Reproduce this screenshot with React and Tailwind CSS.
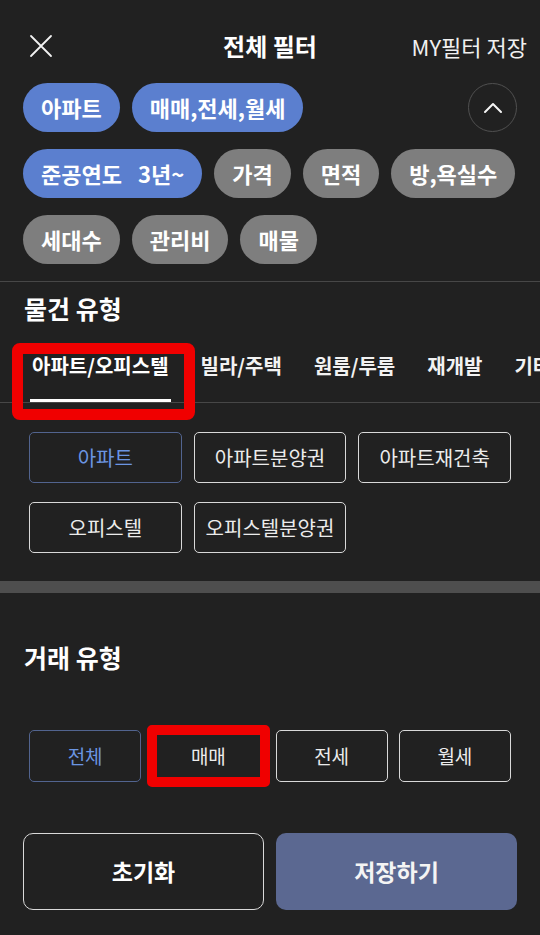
import React from "react";

const font = { fontFamily: '"Noto Sans CJK KR", "Noto Sans", sans-serif' };

function Chip({ children, blue }) {
  return (
    <div
      className={`h-[49px] px-[18px] rounded-full flex items-center text-[22px] font-bold text-white whitespace-nowrap ${
        blue ? "bg-[#5b7fcf]" : "bg-[#7e7e7e]"
      }`}
    >
      {children}
    </div>
  );
}

function Opt({ children, sel, h = "h-[51px]", size = "text-[20px]" }) {
  return (
    <div
      className={`${h} ${size} rounded-[5px] border-[1.5px] flex items-center justify-center ${
        sel ? "border-[#52648f] text-[#6b95e2]" : "border-[#d9d9d9] text-[#ececec]"
      }`}
    >
      {children}
    </div>
  );
}

const tabCls =
  "shrink-0 pt-[26px] pb-[19px] px-[2px] border-b-[3px] border-transparent text-[20px] leading-[28px] font-bold text-[#f2f2f2]";

export default function App() {
  return (
    <div className="min-h-screen w-[540px] bg-[#212121] text-white overflow-hidden" style={font}>
      {/* header */}
      <div className="mt-[16px] h-[60px] flex items-center justify-between pl-[29px] pr-[13px] relative">
        <svg width="24" height="24" viewBox="0 0 24 24" fill="none" stroke="#f2f2f2" strokeWidth="1.8" strokeLinecap="round">
          <path d="M2 2 L22 22 M22 2 L2 22" />
        </svg>
        <div className="absolute left-1/2 -translate-x-1/2 text-[24px] font-bold">전체 필터</div>
        <div className="text-[22px] text-[#f0f0f0]">MY필터 저장</div>
      </div>

      {/* chips */}
      <div className="mt-[7px] px-[23px] flex flex-col gap-y-[17px]">
        <div className="flex items-center gap-[12px]">
          <Chip blue>아파트</Chip>
          <Chip blue>매매,전세,월세</Chip>
          <div className="ml-auto w-[49px] h-[49px] rounded-full border border-[#505050] flex items-center justify-center">
            <svg width="24" height="24" viewBox="0 0 24 24" fill="none" stroke="#f5f5f5" strokeWidth="2" strokeLinecap="round" strokeLinejoin="round">
              <path d="M4 16 L12 8 L20 16" />
            </svg>
          </div>
        </div>
        <div className="flex items-center gap-[12px]">
          <Chip blue>
            준공연도<span className="ml-[16px]">3년~</span>
          </Chip>
          <Chip>가격</Chip>
          <Chip>면적</Chip>
          <Chip>방,욕실수</Chip>
        </div>
        <div className="flex items-center gap-[12px]">
          <Chip>세대수</Chip>
          <Chip>관리비</Chip>
          <Chip>매물</Chip>
        </div>
      </div>

      <div className="mt-[17px] border-t border-[#474747]" />

      {/* 물건 유형 */}
      <div className="mt-[8px] px-[24px] text-[25px] leading-[36px] font-bold">물건 유형</div>

      <div className="flex items-end gap-[28px] pl-[30px] border-b border-[#474747] whitespace-nowrap overflow-hidden">
        <div className="relative shrink-0 pt-[26px] pb-[19px] px-[2px] border-b-[3px] border-white text-[20px] leading-[28px] font-bold">
          아파트/오피스텔
        </div>
        <div className={tabCls}>빌라/주택</div>
        <div className={tabCls}>원룸/투룸</div>
        <div className={tabCls}>재개발</div>
        <div className={tabCls}>기타</div>
      </div>
      <div className="relative h-0">
        <div className="absolute left-[12px] w-[183px] top-[-60px] h-[77px] border-[11px] border-[#f00000] rounded-[8px]" />
      </div>

      <div className="mt-[29px] px-[29px] grid grid-cols-3 gap-x-[12px] gap-y-[19px]">
        <Opt sel>아파트</Opt>
        <Opt>아파트분양권</Opt>
        <Opt>아파트재건축</Opt>
        <Opt>오피스텔</Opt>
        <Opt>오피스텔분양권</Opt>
      </div>

      <div className="mt-[28px] h-[12px] bg-[#4e4e4e]" />

      {/* 거래 유형 */}
      <div className="mt-[46px] px-[24px] text-[25px] leading-[36px] font-bold">거래 유형</div>

      <div className="mt-[55px] px-[29px] grid grid-cols-4 gap-x-[11px]">
        <Opt sel h="h-[52px]" size="text-[19px]">전체</Opt>
        <div className="relative">
          <Opt h="h-[52px]" size="text-[19px]">매매</Opt>
          <div className="absolute -inset-[5px] border-[10px] border-[#f00000] rounded-[5px]" />
        </div>
        <Opt h="h-[52px]" size="text-[19px]">전세</Opt>
        <Opt h="h-[52px]" size="text-[19px]">월세</Opt>
      </div>

      <div className="mt-[51px] px-[23px] grid grid-cols-2 gap-x-[12px]">
        <div className="h-[77px] rounded-[10px] border-[1.5px] border-[#d9d9d9] flex items-center justify-center text-[23px] font-bold">초기화</div>
        <div className="h-[77px] rounded-[10px] bg-[#5b6891] flex items-center justify-center text-[23px] font-bold text-[#f4f4f4]">저장하기</div>
      </div>
    </div>
  );
}
